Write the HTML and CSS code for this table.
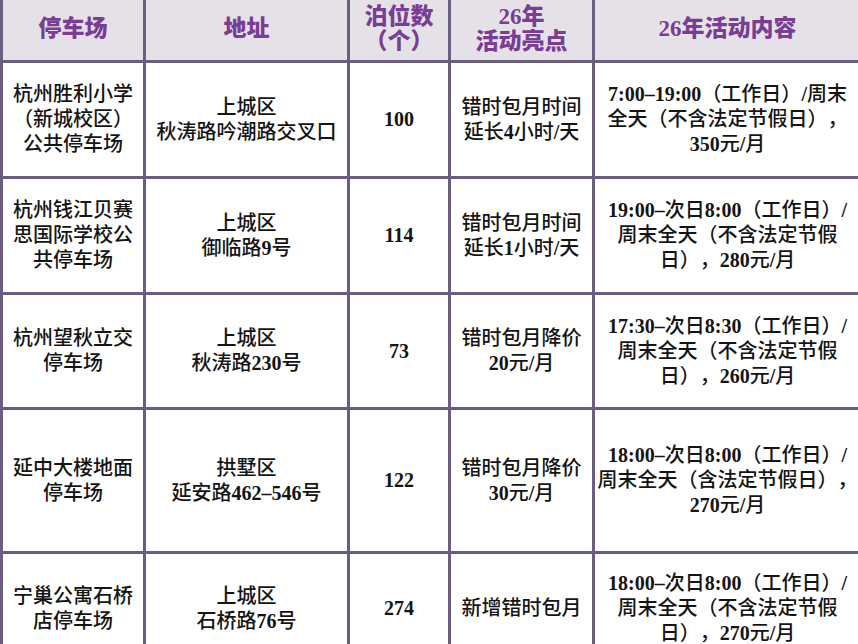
FILE: index.html
```html
<!DOCTYPE html>
<html lang="zh-CN">
<head>
<meta charset="utf-8">
<title>停车场错时包月</title>
<link rel="stylesheet" href="styles.css">
</head>
<body>
<table class="park">
  <colgroup>
    <col class="c1"><col class="c2"><col class="c3"><col class="c4"><col class="c5">
  </colgroup>
  <thead>
    <tr class="head">
      <th>停车场</th>
      <th>地址</th>
      <th>泊位数<br>（个）</th>
      <th><b class="n">26</b>年<br>活动亮点</th>
      <th><b class="n">26</b>年活动内容</th>
    </tr>
  </thead>
  <tbody>
    <tr class="r1">
      <td>杭州胜利小学<br>（新城校区）<br>公共停车场</td>
      <td>上城区<br>秋涛路吟潮路交叉口</td>
      <td><b class="n">100</b></td>
      <td>错时包月时间<br>延长<b class="n">4</b>小时<b class="n">/</b>天</td>
      <td><b class="n">7:00–19:00</b>（工作日）<b class="n">/</b>周末<br>全天（不含法定节假日），<br><b class="n">350</b>元<b class="n">/</b>月</td>
    </tr>
    <tr class="r2">
      <td>杭州钱江贝赛<br>思国际学校公<br>共停车场</td>
      <td>上城区<br>御临路<b class="n">9</b>号</td>
      <td><b class="n">114</b></td>
      <td>错时包月时间<br>延长<b class="n">1</b>小时<b class="n">/</b>天</td>
      <td><b class="n">19:00–</b>次日<b class="n">8:00</b>（工作日）<b class="n">/</b><br>周末全天（不含法定节假<br>日），<b class="n">280</b>元<b class="n">/</b>月</td>
    </tr>
    <tr class="r3">
      <td>杭州望秋立交<br>停车场</td>
      <td>上城区<br>秋涛路<b class="n">230</b>号</td>
      <td><b class="n">73</b></td>
      <td>错时包月降价<br><b class="n">20</b>元<b class="n">/</b>月</td>
      <td><b class="n">17:30–</b>次日<b class="n">8:30</b>（工作日）<b class="n">/</b><br>周末全天（不含法定节假<br>日），<b class="n">260</b>元<b class="n">/</b>月</td>
    </tr>
    <tr class="r4">
      <td>延中大楼地面<br>停车场</td>
      <td>拱墅区<br>延安路<b class="n">462–546</b>号</td>
      <td><b class="n">122</b></td>
      <td>错时包月降价<br><b class="n">30</b>元<b class="n">/</b>月</td>
      <td><b class="n">18:00–</b>次日<b class="n">8:00</b>（工作日）<b class="n">/</b><br>周末全天（含法定节假日），<br><b class="n">270</b>元<b class="n">/</b>月</td>
    </tr>
    <tr class="r5">
      <td>宁巢公寓石桥<br>店停车场</td>
      <td>上城区<br>石桥路<b class="n">76</b>号</td>
      <td><b class="n">274</b></td>
      <td>新增错时包月</td>
      <td><b class="n">18:00–</b>次日<b class="n">8:00</b>（工作日）<b class="n">/</b><br>周末全天（不含法定节假<br>日），<b class="n">270</b>元<b class="n">/</b>月</td>
    </tr>
  </tbody>
</table>
</body>
</html>
```

FILE: styles.css
```css
html, body {
  margin: 0;
  padding: 0;
  overflow: hidden;
  background: #ffffff;
}

.park {
  border-collapse: collapse;
  table-layout: fixed;
  width: 860px;
  margin: -6px 0 0 0;
  font-family: "Liberation Serif", "Noto Sans CJK SC", serif;
  color: #141414;
  text-spacing-trim: space-all;
}

.c1 { width: 143px; }
.c2 { width: 204px; }
.c3 { width: 101px; }
.c4 { width: 144px; }
.c5 { width: 268px; }

.park th,
.park td {
  border: 3px solid #6b5d7f;
  padding: 0 1px;
  text-align: center;
  vertical-align: middle;
  white-space: nowrap;
}

.park th {
  background: #e5e2e7;
  color: #7a3d95;
  font-size: 23px;
  line-height: 25px;
  font-weight: 900;
}

.park td {
  font-size: 20px;
  line-height: 25px;
  font-weight: 500;
}

.n {
  font-weight: 700;
}

.head { height: 66px; }
.r1 { height: 116px; }
.r2 { height: 116px; }
.r3 { height: 115px; }
.r4 { height: 144px; }
.r5 { height: 112px; }
```
